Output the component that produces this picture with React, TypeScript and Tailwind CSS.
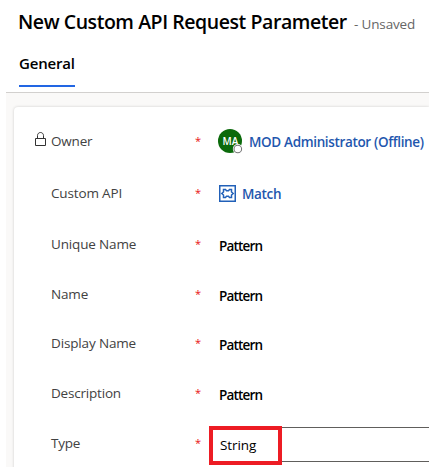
import type { ReactNode } from "react";

function Lock() {
  return (
    <svg width="12" height="15" viewBox="0 0 12 15" fill="none" stroke="#333" strokeWidth="1">
      <path d="M0.5 6.5h10v7h-10zM2.5 6.5V3.6C2.5 1.8 3.8.5 5.5.5S8.500 1.800 8.500 3.600V6.500" />
    </svg>
  );
}

function Avatar() {
  return (
    <svg width="25" height="25" viewBox="0 0 25 25" className="shrink-0">
      <circle cx="12" cy="12" r="12" fill="#0b6a0b" />
      <text x="12.500" y="15.700" textAnchor="middle" fontSize="10" fontWeight="600" fill="#fff" fontFamily="Open Sans, sans-serif">MA</text>
      <circle cx="19.800" cy="20" r="5" fill="#fff" />
      <circle cx="19.800" cy="20" r="3.800" fill="#fff" stroke="#777" strokeWidth="1.100" />
    </svg>
  );
}

function PuzzleIcon() {
  return (
    <svg width="17" height="17" viewBox="0 0 17 17" fill="none" stroke="#2160b8" className="shrink-0">
      <rect x="0.750" y="0.750" width="15.500" height="15.500" strokeWidth="1.500" />
      <path strokeWidth="1.500" d="M4.500 4.500H6.500L7.500 5.700H9.500L10.500 4.500H12.500V7L14.200 8.500L12.500 10V12.500H10.500L9.500 11.300H7.500L6.500 12.500H4.500V10L2.800 8.500L4.500 7Z" />
    </svg>
  );
}

type FieldProps = { label: string; labelClass: string; height: string; lock?: boolean; children: ReactNode };

function Field({ label, labelClass, height, lock, children }: FieldProps) {
  return (
    <div className={`flex items-center ${height}`}>
      <div className="flex w-[37px] shrink-0 justify-end pr-[4px] pb-[4px]">{lock && <Lock />}</div>
      <div className={`w-[144px] shrink-0 text-[13.5px] leading-5 text-[#424242] ${labelClass}`}>{label}</div>
      <div className="w-[13px] shrink-0 text-[11px] leading-5 text-[#e81010]">*</div>
      {children}
    </div>
  );
}

function Pattern() {
  return <div className="pt-[4px] pl-[11px] text-[13.5px] leading-5 font-semibold tracking-[-0.8px] text-black">Pattern</div>;
}

export default function App() {
  return (
    <div className="h-[475px] w-[437px] overflow-hidden bg-white font-['Open_Sans','Noto_Sans',sans-serif]">
      <header className="h-[92px] pl-[19px]">
        <div className="flex h-[44px] items-baseline pt-[8px] whitespace-nowrap">
          <h1 className="-ml-px w-[336px] shrink-0 text-[19.5px] leading-7 font-semibold tracking-[-0.44px] text-black">New Custom API Request Parameter</h1>
          <span className="text-[13.5px] tracking-[-0.15px] text-[#666]">- Unsaved</span>
        </div>
        <div className="flex h-[43px] w-[56px] items-start border-b-2 border-[#2266e3] pt-[9px] text-[15px] leading-5 font-semibold tracking-[-0.2px] text-black">General</div>
      </header>
      <main className="ml-[6px] h-[375px] w-[423px] overflow-hidden border-t border-[#d2d0ce] bg-[#faf9f8] pt-[14px] pl-[8px]">
        <div className="h-[370px] rounded-tl-[4px] bg-white pt-[8px] shadow-[0_0_3px_rgba(0,0,0,0.18)]">
          <Field label="Owner" labelClass="tracking-[-0.2px]" height="h-[52px]" lock>
            <div className="flex items-center gap-[6px] pl-[10px]">
              <Avatar />
              <span className="pt-[2px] text-[13.5px] leading-5 font-semibold tracking-[-0.35px] whitespace-nowrap text-[#1f57ae]">MOD Administrator (Offline)</span>
            </div>
          </Field>
          <Field label="Custom API" labelClass="tracking-[-0.15px]" height="h-[52px]">
            <div className="flex items-center gap-[6px] pl-[11px]">
              <PuzzleIcon />
              <span className="pt-[2px] text-[13.5px] leading-5 font-semibold tracking-[-0.35px] text-[#1f57ae]">Match</span>
            </div>
          </Field>
          <Field label="Unique Name" labelClass="tracking-[-0.15px]" height="h-[50px]"><Pattern /></Field>
          <Field label="Name" labelClass="tracking-[-0.15px]" height="h-[50px]"><Pattern /></Field>
          <Field label="Display Name" labelClass="tracking-[-0.15px]" height="h-[48px]"><Pattern /></Field>
          <Field label="Description" labelClass="tracking-[-0.2px]" height="h-[51px]"><Pattern /></Field>
          <Field label="Type" labelClass="tracking-[-0.2px]" height="h-[50px]">
            <div className="ml-px mt-[5px] flex h-[39px] flex-1 items-center">
              <div className="flex h-[39px] w-[73px] shrink-0 items-center border-4 border-[#ed1c24] pb-[2px] pl-[7px] text-[13.5px] leading-5 tracking-[-0.1px] text-black">String</div>
              <div className="mb-[2px] h-[35px] flex-1 border-y border-[#605e5c]" />
            </div>
          </Field>
        </div>
      </main>
    </div>
  );
}
